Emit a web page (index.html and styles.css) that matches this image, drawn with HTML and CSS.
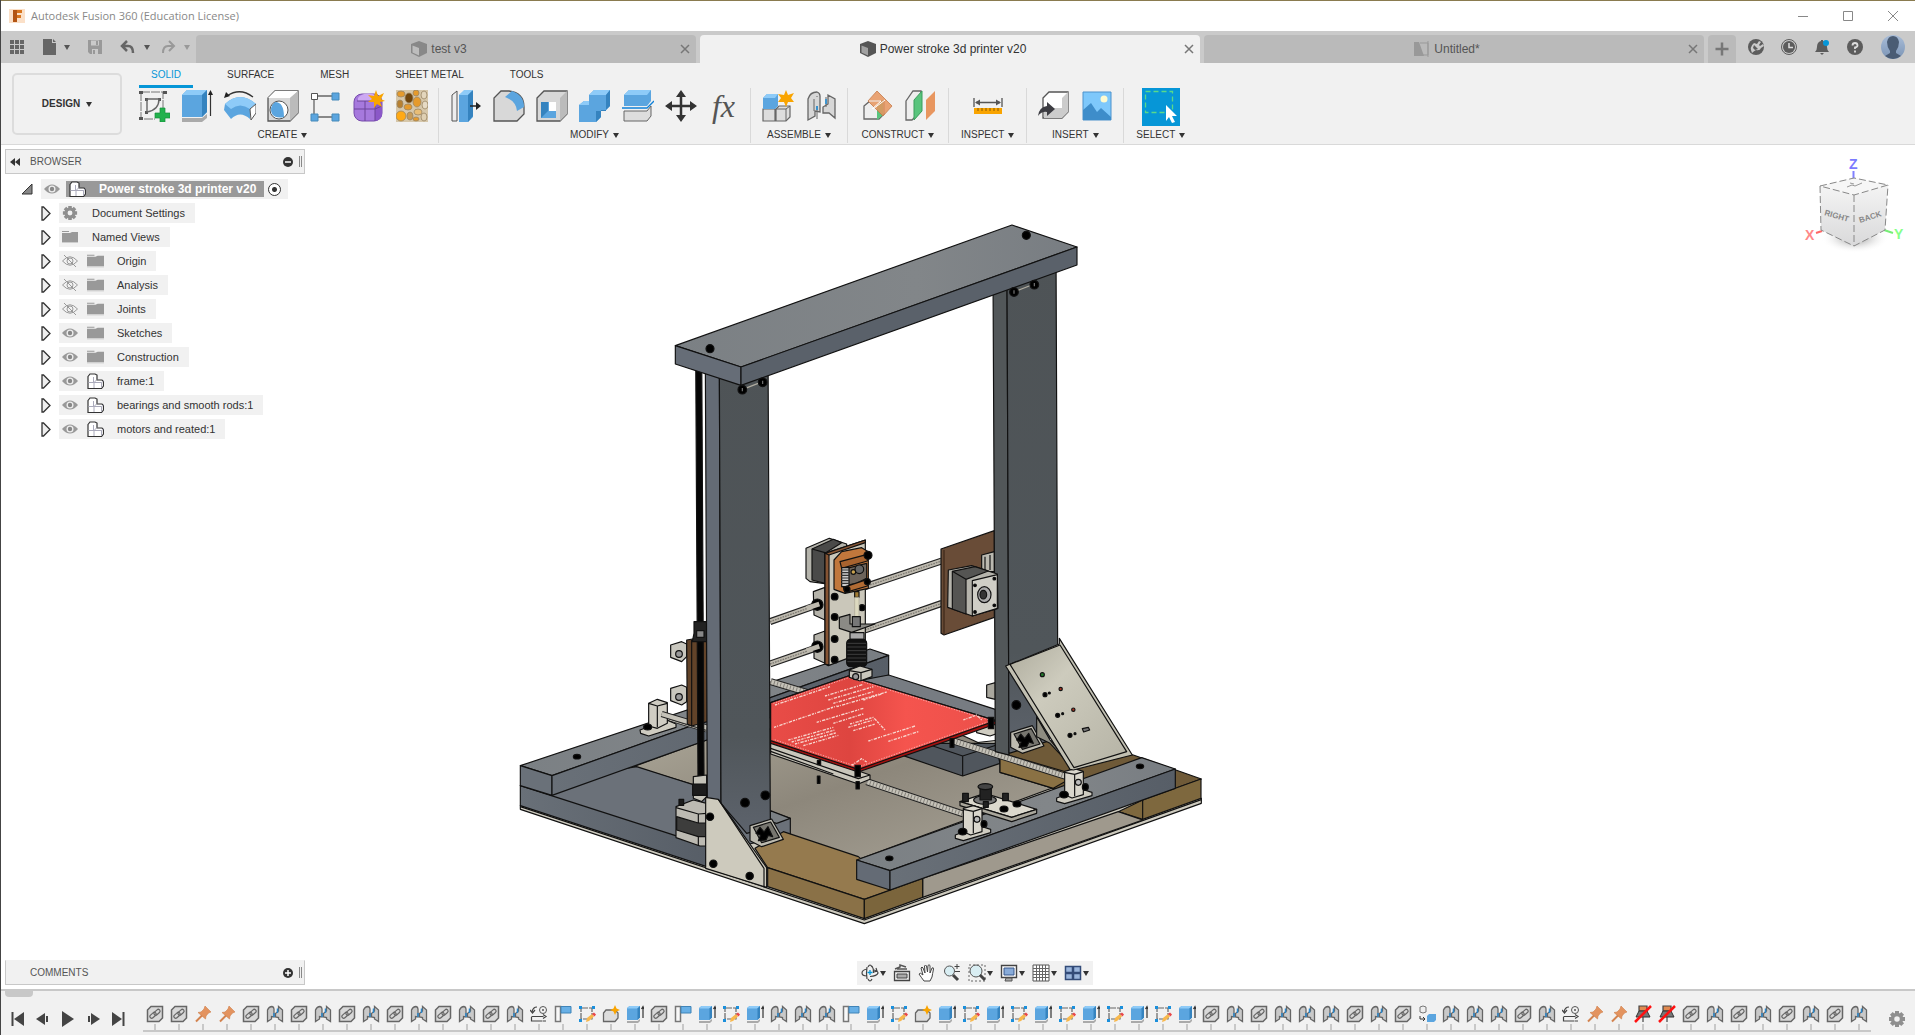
FILE: index.html
```html
<!DOCTYPE html>
<html lang="en">
<head>
<meta charset="utf-8">
<title>Autodesk Fusion 360 (Education License)</title>
<link rel="stylesheet" href="styles.css">
</head>
<body>
<svg class="defs" aria-hidden="true">
  <defs>
    <linearGradient id="floorG" x1="0" x2="1" y1="0" y2="1"><stop offset="0" stop-color="#b0ab9c"/><stop offset=".5" stop-color="#8d877b"/><stop offset="1" stop-color="#a9a498"/></linearGradient>
    <linearGradient id="topG" x1="0" x2="1"><stop offset="0" stop-color="#7b8084"/><stop offset=".6" stop-color="#828689"/><stop offset="1" stop-color="#787d82"/></linearGradient>
    <linearGradient id="sideG" x1="0" x2="1"><stop offset="0" stop-color="#697078"/><stop offset="1" stop-color="#575e67"/></linearGradient>
    <linearGradient id="colG" x1="0" x2="0" y1="0" y2="1"><stop offset="0" stop-color="#4e5356"/><stop offset=".8" stop-color="#50565a"/><stop offset="1" stop-color="#5d636c"/></linearGradient>
    <linearGradient id="panelG" x1="0" x2="1" y1="0" y2="1"><stop offset="0" stop-color="#aeac9d"/><stop offset=".35" stop-color="#cdcbbd"/><stop offset="1" stop-color="#b5b3a5"/></linearGradient>
    <linearGradient id="bedG" x1="0" x2="1"><stop offset="0" stop-color="#e94c47"/><stop offset=".35" stop-color="#de4540"/><stop offset=".6" stop-color="#f5544e"/><stop offset="1" stop-color="#ec504a"/></linearGradient>
    <linearGradient id="cubeG" x1="0" x2="0" y1="0" y2="1"><stop offset="0" stop-color="#f4f4f4"/><stop offset="1" stop-color="#d9d9da"/></linearGradient>
    <linearGradient id="avG" x1="0" x2="0" y1="0" y2="1"><stop offset="0" stop-color="#a9bdd8"/><stop offset="1" stop-color="#7b94b5"/></linearGradient>
    <radialGradient id="shG"><stop offset="0" stop-color="#888"/><stop offset="1" stop-color="#fff" stop-opacity="0"/></radialGradient>
  </defs>
  <symbol id="eye" viewBox="0 0 16 12"><path d="M0 6Q8-3 16 6Q8 15 0 6Z" fill="#999"/><circle cx="8" cy="6" r="3.500" fill="#eee"/><circle cx="8" cy="6" r="2.200" fill="#888"/></symbol>
  <symbol id="eyeoff" viewBox="0 0 16 12"><path d="M.5 6Q8-2.500 15.500 6Q8 14.500 .5 6ZM2 0L14 12" fill="none" stroke="#999"/><circle cx="8" cy="6" r="3" fill="none" stroke="#999"/></symbol>
  <symbol id="folder" viewBox="0 0 16 14"><path d="M0 1h7v1H0zM0 3h8l2-1h6v10H0z" fill="#999"/><path d="M0 12h16v1H0z" fill="#ccc"/></symbol>
  <symbol id="comp" viewBox="0 0 17 16"><path d="M1 3.500L3 1h5l2 1v5l5 0 1.500 1.500V13l-2 2.500H1Z" fill="#fff" stroke="#333" stroke-width="1.200"/><path d="M1.500 9.500h5.500v5.500M7 9.500l3-3M7 9.500h7.500M14.500 9.500l2-1.500M14.500 9.500v5M6.500 4v5" fill="none" stroke="#aab" stroke-width="1"/></symbol>
  <symbol id="tri" viewBox="0 0 10 15"><path d="M1 1L2.500 1 9 7.500 2.500 14 1 14Z" fill="#eee" stroke="#333" stroke-width="1.300"/></symbol>
  <symbol id="caret" viewBox="0 0 6 5"><path d="M0 0h6L3 5Z" fill="currentColor"/></symbol>
  <symbol id="link" viewBox="0 0 18 18"><path d="M1.500 5L5 1.500h11.500V13L13 16.500H1.500Z" fill="#d8d8d8" stroke="#666" stroke-width="1.500"/><g fill="none" stroke="#666" stroke-width="1.200"><rect x="3.500" y="8.500" width="7" height="3.600" rx="1.800" transform="rotate(-42 7 10.300)"/><rect x="7.500" y="5.500" width="7" height="3.600" rx="1.800" transform="rotate(-42 11 7.300)"/></g></symbol>
  <symbol id="joint" viewBox="0 0 18 18"><path d="M1.500 16.500V5Q3 1.500 6 1.500Q8 2 8 4V12L5.500 11.500V14ZM16.500 16.500V5L12.500 1.500V6L9.500 8.500V12L12.500 12.500V14Z" fill="#c9c9c9" stroke="#666" stroke-width="1.300"/><path d="M8 8v4M11.500 3.500V8" stroke="#2a87cc" stroke-width="1.500"/></symbol>
  <symbol id="pin" viewBox="0 0 18 18"><path d="M11 1L17 7 14.500 8 12 11 11.500 14 4 7.500 7 7 10 4Z" fill="#e3935f" stroke="#cf7f4c" stroke-width=".6"/><path d="M8 10.500L2 16.500" stroke="#d3834f" stroke-width="2"/></symbol>
  <symbol id="redpin" viewBox="0 0 18 18"><path d="M5 1h8v5H5zM9 12v5" fill="#e08a50" stroke="#444" stroke-width="1.200"/><path d="M5 6h8l3 6H2Z" fill="#777" stroke="#333"/><path d="M1 17L17 1" stroke="#f11" stroke-width="2.500"/></symbol>
  <symbol id="motion" viewBox="0 0 18 18"><circle cx="13" cy="5" r="3.500" fill="none" stroke="#555"/><circle cx="13" cy="5" r="1" fill="#555"/><path d="M2 7Q3 2 7 2M0 5l2.500 3L5 5M1.500 12v4h11M1.500 11.500h12M13 9.500l3 2-3 2M13 16h3" fill="none" stroke="#444" stroke-width="1.200"/></symbol>
  <symbol id="flag" viewBox="0 0 18 18"><path d="M1.500 1.500h5v15h-5z" fill="#f8f8f8" stroke="#777" stroke-width="1.500"/><path d="M7 1.500h10v6.500H7z" fill="#68b0e6" stroke="#3f84b8"/></symbol>
  <symbol id="sk" viewBox="0 0 18 18"><path d="M3 3h11v11H3z" fill="none" stroke="#666" stroke-width="1.200" stroke-dasharray="7 1"/><path d="M1 1h3v3H1zM14 1h3v3h-3zM1 14h3v3H1z" fill="#1b8fdb"/><path d="M8 17l1-4 5-4 2 2.500-5 4.500Z" fill="#f8b84d"/><path d="M14 9l2-1.500 2 2L16.500 11.500Z" fill="#e8474a"/></symbol>
  <symbol id="newc" viewBox="0 0 18 18"><path d="M1.500 8L4 5h9l3 3v5l-3 3.500H1.500Z" fill="#ddd" stroke="#666" stroke-width="1.300"/><path d="M13 0l1.500 3.500L18 5l-3.500 1.500L13 10l-1.500-3.500L8 5l3.500-1.500Z" fill="#f9a400"/></symbol>
  <symbol id="ext" viewBox="0 0 18 18"><path d="M1 3L3.500 1H14v11.500L11.500 15H1Z" fill="#5ba5df"/><path d="M1 3.500L3.500 1H14L11.500 3.500Z" fill="#8ecbf8"/><path d="M11.500 3.500L14 1v11.500L11.500 15Z" fill="#3583bf"/><path d="M1 16h10.500l2.500-2v2l-2 2H1Z" fill="#aaa"/><path d="M17 2v11M15.500 4L17 1.500 18 4" fill="none" stroke="#333" stroke-width="1.200"/></symbol>
  <symbol id="copy" viewBox="0 0 18 18"><path d="M2 2Q5 0 8 2v5Q5 9 2 7Z" fill="#eee" stroke="#777"/><path d="M2 11v3h4M5 12l2 2-2 2" fill="none" stroke="#333"/><path d="M9 11l2-2h7v6l-2 2H9Z" fill="#5ba5df"/></symbol>
  <symbol id="cube" viewBox="0 0 16 16"><path d="M0 3L8 0 16 3V12L8 16 0 12Z" fill="currentColor"/><path d="M1.500 4.500L8 7V14.500L1.500 11.500Z" fill="#fff" opacity=".45"/></symbol>
  <symbol id="gear" viewBox="0 0 18 18"><path d="M7 1h4v16H7zM1 7h16v4H1z" fill="#8f8f8f"/><path d="M7 1h4v16H7zM1 7h16v4H1z" fill="#8f8f8f" transform="rotate(45 9 9)"/><circle cx="9" cy="9" r="4.500" fill="#f1f1f1" stroke="#8f8f8f" stroke-width="3.500"/></symbol>
</svg>

<header class="titlebar">
  <svg class="i16" viewBox="0 0 16 16"><path d="M0 1h16v14H0z" fill="#fbe0c8"/><path d="M4 2h9v3H8v2h4v3H8v4H4Z" fill="#d8751f"/><path d="M4 2h4v12H4z" fill="#b35413"/></svg>
  <h1 class="title">Autodesk Fusion 360 (Education License)</h1>
  <div class="wincontrols">
    <button aria-label="Minimize"><svg class="i12" viewBox="0 0 12 12"><path d="M1 6.500h10" stroke="#888"/></svg></button>
    <button aria-label="Maximize"><svg class="i12" viewBox="0 0 12 12"><path d="M1.500 1.500h9v9h-9z" fill="none" stroke="#888"/></svg></button>
    <button aria-label="Close"><svg class="i12" viewBox="0 0 12 12"><path d="M1 1l10 10M11 1L1 11" stroke="#888"/></svg></button>
  </div>
</header>

<div class="tabbar">
  <div class="quick">
    <button aria-label="Data panel"><svg class="i16" viewBox="0 0 16 16"><path d="M1 1h4v4H1zM6 1h4v4H6zM11 1h4v4h-4zM1 6h4v4H1zM6 6h4v4H6zM11 6h4v4h-4zM1 11h4v4H1zM6 11h4v4H6zM11 11h4v4h-4z" fill="#666"/></svg></button>
    <button aria-label="File"><svg class="i16" viewBox="0 0 16 16"><path d="M1 0h9v4h4v12H1zM11 0l3 3h-3z" fill="#666"/></svg><svg class="caret"><use href="#caret"/></svg></button>
    <button aria-label="Save"><svg class="i16" viewBox="0 0 16 16"><path d="M1 1h14v14H3l-2-2z" fill="#999"/><path d="M4 1.500h8v5H4zM5 10h6v5H5z" fill="#cacaca"/><path d="M9 2h2v4H9zM6 11h2v4H6z" fill="#999"/></svg></button>
    <button aria-label="Undo"><svg class="i16" viewBox="0 0 16 16"><path d="M7 2L2 7l5 5M2 7h6q5 0 5 7" fill="none" stroke="#666" stroke-width="2.500"/></svg><svg class="caret"><use href="#caret"/></svg></button>
    <button aria-label="Redo" class="dim"><svg class="i16" viewBox="0 0 16 16"><path d="M9 2l5 5-5 5M14 7H8q-5 0-5 7" fill="none" stroke="#999" stroke-width="2"/></svg><svg class="caret"><use href="#caret"/></svg></button>
  </div>
  <nav class="doctabs">
    <div class="doctab"><a href="#test"><svg class="i16"><use href="#cube"/></svg>test v3</a><button aria-label="Close test v3"><svg class="i12" viewBox="0 0 12 12"><path d="M2 2l8 8M10 2l-8 8" stroke="#777" stroke-width="1.500"/></svg></button></div>
    <div class="doctab on"><a href="#printer"><svg class="i16"><use href="#cube"/></svg>Power stroke 3d printer v20</a><button aria-label="Close Power stroke"><svg class="i12" viewBox="0 0 12 12"><path d="M2 2l8 8M10 2l-8 8" stroke="#777" stroke-width="1.500"/></svg></button></div>
    <div class="doctab"><a href="#untitled"><svg class="i16" viewBox="0 0 16 16"><path d="M0 1h5l5 14H0z" fill="#999"/><path d="M6 2h8v12H9M14 0v16" fill="none" stroke="#999"/></svg>Untitled*</a><button aria-label="Close Untitled"><svg class="i12" viewBox="0 0 12 12"><path d="M2 2l8 8M10 2l-8 8" stroke="#777" stroke-width="1.500"/></svg></button></div>
  </nav>
  <button class="newtab" aria-label="New tab"><svg class="i16" viewBox="0 0 16 16"><path d="M8 1.500v13M1.500 8h13" stroke="#777" stroke-width="2.500"/></svg></button>
  <div class="account">
    <button aria-label="Extensions"><svg class="i16" viewBox="0 0 16 16"><circle cx="8" cy="8" r="8" fill="#5c5c5c"/><path d="M4 14Q1 8 6 4l3 1 2-3 2 1-2 3 1 1 3-2 1 2-3 2q-1 3-5 2Q6 12 4 14Z" fill="#cacaca"/><path d="M6 6l4 4-3 1-2-2Z" fill="#5c5c5c"/></svg></button>
    <button aria-label="Job status"><svg class="i16" viewBox="0 0 16 16"><circle cx="8" cy="8" r="7.500" fill="none" stroke="#5c5c5c"/><circle cx="8" cy="8" r="6" fill="#5c5c5c"/><path d="M8 4v4.500h4" fill="none" stroke="#ddd" stroke-width="1.500"/></svg></button>
    <button aria-label="Notifications"><svg class="i16" viewBox="0 0 16 16"><path d="M7 1h2v1q4 1 4 6 0 3 2 5H1q2-2 2-5 0-5 4-6ZM6 14h4l-2 2Z" fill="#5c5c5c"/><circle cx="12" cy="4" r="3" fill="#0696d7"/></svg></button>
    <button aria-label="Help"><svg class="i16" viewBox="0 0 16 16"><circle cx="8" cy="8" r="8" fill="#5c5c5c"/><path d="M5.500 6.500Q5.500 4 8 4t2.500 2.500Q10.500 8 8 8.500V10M8 11.500v2" fill="none" stroke="#ddd" stroke-width="1.800"/></svg></button>
    <button class="avatar" aria-label="Profile"><svg viewBox="0 0 24 24"><circle cx="12" cy="12" r="12" fill="url(#avG)"/><path d="M6 7Q7 1 12 1t6 6q0 5-3 9v2l5 3q-4 3-8 3t-8-3l5-3v-2Q6 12 6 7Z" fill="#4a5c74"/></svg></button>
  </div>
</div>

<div class="ribbon">
  <button class="workspace">DESIGN <svg class="caret"><use href="#caret"/></svg></button>
  <div class="tools">
    <nav class="modes"><a class="on" href="#solid">SOLID</a><a href="#surface">SURFACE</a><a href="#mesh">MESH</a><a href="#sheet">SHEET METAL</a><a href="#tools">TOOLS</a></nav>
    <div class="groups">
      <section class="group">
        <div class="icons">
          <button aria-label="Create Sketch"><svg viewBox="0 0 32 32"><path d="M3 2h22v18M3 2v27h14" fill="none" stroke="#777" stroke-dasharray="9 1"/><path d="M1 1h4v3H1zM25 1h4v3h-4zM1 27h4v3H1zM7 8h3v3H7zM20 8h3v3h-3zM7 21h3v3H7z" fill="#555"/><path d="M9 9h12Q21 20 9 22Z" fill="none" stroke="#666" stroke-width="1.400"/><path d="M22 18h5v5h5v5h-5v4h-5v-4h-5v-5h5z" fill="#22b14c" stroke="#14903a" stroke-width=".7"/></svg></button>
          <button aria-label="Extrude"><svg viewBox="0 0 32 32"><path d="M1 5L6 0h20v22l-5 5H1Z" fill="#5ba5df"/><path d="M1 5L6 0h20l-5 5Z" fill="#8ecbf8"/><path d="M21 5l5-5v22l-5 5Z" fill="#3583bf"/><path d="M1 28h20l5-4v4l-5 4H1Z" fill="#aaa"/><path d="M29.500 3v23" stroke="#333" stroke-width="1.200"/><path d="M27 5l2.500-5L32 5Z" fill="#222"/></svg></button>
          <button aria-label="Revolve"><svg viewBox="0 0 32 32"><path d="M3 6Q16-3 29 7" fill="none" stroke="#333" stroke-width="1.300"/><path d="M0 8l2-6 4 4Z" fill="#222"/><path d="M1 14Q16 0 32 14l-6 4v11Q16 20 7 29L0 20Z" fill="#5ba5df"/><path d="M1 14Q16 0 32 14l-6 5Q16 12 7 19Z" fill="#8ecbf8"/><path d="M26 19l6-5v9l-5 7Z" fill="#fff" stroke="#555"/></svg></button>
          <button aria-label="Hole"><svg viewBox="0 0 32 32"><path d="M1 8L8 1h23v22l-8 8H1Z" fill="#d8d8d8" stroke="#555" stroke-width="1.300"/><path d="M1 8L8 1h23l-8 7Z" fill="#fff"/><path d="M23 8l8-7v22l-8 8Z" fill="#bbb"/><circle cx="12" cy="20" r="9" fill="#fff" stroke="#555"/><path d="M8 12q9 0 9 15-8 2-12-3-3-7 3-12Z" fill="#5ba5df"/></svg></button>
          <button aria-label="Pattern"><svg viewBox="0 0 32 32"><path d="M8 6h14M4 10v14M8 27h14" stroke="#666" stroke-width="1.300"/><path d="M1.500 3.500h6v6h-6z" fill="#fff" stroke="#555"/><path d="M22 3h7v7h-7zM1 24h7v7H1zM22 24h7v7h-7z" fill="#5ba5df" stroke="#478ab9"/></svg></button>
          <button aria-label="Create Form"><svg viewBox="0 0 32 32"><rect x="1" y="4" width="28" height="27" rx="8" fill="#a679dd" stroke="#774cac"/><path d="M5 8Q9 2 20 4l5 4-3 3H5Z" fill="#cda8f3"/><path d="M22 11q7-4 7 2v11q0 6-7 7Z" fill="#8b58c8"/><path d="M1 19h21l7-3M12 11v20M22 11v20M4 11h18" fill="none" stroke="#6c4599"/><path d="M23 0l2 6 6-3-3 6 4 2-5 1 2 5-5-3-3 4v-6l-6 0 4-3-4-4 6 1Z" fill="#f9a400"/></svg></button>
          <button aria-label="Voronoi Texture"><svg viewBox="0 0 32 32"><path d="M0 0h32v32H0z" fill="#d6c7aa"/><g fill="#e59a2c" stroke="#9b8766" stroke-width=".8"><ellipse cx="5" cy="4" rx="4" ry="3"/><ellipse cx="13" cy="8" rx="4" ry="5" fill="#70450c"/><ellipse cx="20" cy="3" rx="3" ry="3"/><ellipse cx="28" cy="5" rx="3" ry="4" fill="#e3d6bd"/><ellipse cx="4" cy="14" rx="3" ry="4" fill="#b88131"/><ellipse cx="12" cy="17" rx="4" ry="3"/><ellipse cx="21" cy="12" rx="4" ry="5"/><ellipse cx="29" cy="15" rx="3" ry="4" fill="#e6dac4"/><ellipse cx="5" cy="26" rx="5" ry="5" fill="#ffa914"/><ellipse cx="14" cy="26" rx="3" ry="4" fill="#c79b56"/><ellipse cx="22" cy="22" rx="4" ry="3" fill="#e8bd75"/><ellipse cx="28" cy="27" rx="3" ry="4" fill="#dfd0b3"/><ellipse cx="20" cy="29" rx="3" ry="2"/></g></svg></button>
        </div>
        <button class="label">CREATE <svg class="caret"><use href="#caret"/></svg></button>
      </section>
      <section class="group">
        <div class="icons">
          <button aria-label="Press Pull"><svg viewBox="0 0 32 32"><path d="M2 5l5-4v30H2Z" fill="#eee" stroke="#555"/><path d="M9 5l5-4h9v26l-5 5H9Z" fill="#5ba5df"/><path d="M9 5l5-5h9l-5 5Z" fill="#8ecbf8"/><path d="M18 5l5-5v26l-5 6Z" fill="#3583bf"/><path d="M20 16h8" stroke="#222" stroke-width="1.500"/><path d="M26 12l5 4-5 4Z" fill="#222"/></svg></button>
          <button aria-label="Fillet"><svg viewBox="0 0 32 32"><path d="M1 31V8l7-7h8q15 2 15 16v7l-7 7Z" fill="#d8d8d8" stroke="#555" stroke-width="1.300"/><path d="M12 7l7-6q12 4 12 16l-7 4Q23 11 12 7Z" fill="#5ba5df"/></svg></button>
          <button aria-label="Shell"><svg viewBox="0 0 32 32"><path d="M1 8l7-7h23v23l-7 7H1Z" fill="#d8d8d8" stroke="#555" stroke-width="1.300"/><path d="M24 8l7-7v23l-7 7Z" fill="#bbb"/><path d="M5 12h15v16H5z" fill="#fff"/><path d="M5 12h8v9l7 0v7H5Z" fill="#5ba5df"/><path d="M5 12h7v9l-7 7Z" fill="#3583bf"/></svg></button>
          <button aria-label="Combine"><svg viewBox="0 0 32 32"><path d="M0 15l5-4h5V5l5-5h16v16l-4 4h-5v7l-5 5H0Z" fill="#5ba5df"/><path d="M10 5l5-5h16l-4 5ZM0 15l5-4h5v4Z" fill="#8ecbf8"/><path d="M27 5l4-5v16l-4 4h-5v7l-5 5V21h10Z" fill="#3583bf"/></svg></button>
          <button aria-label="Split Body"><svg viewBox="0 0 32 32"><path d="M2 21h23l4-5v10l-4 5H2Z" fill="#ddd" stroke="#666"/><path d="M2 5l5-5h22v11l-4 5H2Z" fill="#5ba5df"/><path d="M2 5l5-5h22l-4 5Z" fill="#8ecbf8"/><path d="M0 18h25l7-7" fill="none" stroke="#0f80d8" stroke-width="1.300"/></svg></button>
          <button aria-label="Move"><svg viewBox="0 0 32 32"><path d="M16 3v26M3 16h26" stroke="#333" stroke-width="2.500"/><path d="M11 7l5-7 5 7ZM11 25l5 7 5-7ZM7 11l-7 5 7 5ZM25 11l7 5-7 5Z" fill="#333"/></svg></button>
          <button class="fx" aria-label="Parameters">fx</button>
        </div>
        <button class="label">MODIFY <svg class="caret"><use href="#caret"/></svg></button>
      </section>
      <section class="group">
        <div class="icons">
          <button aria-label="New Component"><svg viewBox="0 0 32 32"><path d="M1 19h12v12H1zM14 19l3-3h11v11l-4 4H14Z" fill="#ddd" stroke="#666" stroke-width="1.200"/><path d="M24 19l4-3M24 19v12M14 19h10" stroke="#666"/><path d="M1 8l4-4h11v12l-3 3H1Z" fill="#5ba5df"/><path d="M1 8l4-4h11l-3 4Z" fill="#8ecbf8"/><path d="M24 0l2 5 6-2-3 5 3 4-6 0-2 5-2-5-6 0 3-4-3-4 6 1Z" fill="#f9a400"/></svg></button>
          <button aria-label="Joint"><svg viewBox="0 0 32 32"><path d="M3 30V9Q5 2 12 2q3 1 3 4v16l-5-1v5ZM30 28V9l-7-4v9l-5 3v6l6 0Z" fill="#d7d7d7" stroke="#666" stroke-width="1.300"/><path d="M12 6v1M12 16v13M21 7v10M9 9v12" stroke="#666"/><path d="M12 16v4M21 9v5" stroke="#1b8fdb" stroke-width="1.500"/></svg></button>
        </div>
        <button class="label">ASSEMBLE <svg class="caret"><use href="#caret"/></svg></button>
      </section>
      <section class="group mid">
        <div class="icons">
          <button aria-label="Offset Plane"><svg viewBox="0 0 32 32"><path d="M3 16l6-5h14v13l-5 5H3Z" fill="#eee" stroke="#666" stroke-width="1.300"/><path d="M16 15l6-5v15l-6 5Z" fill="#59c47d"/><path d="M16 1l15 15-9 10L7 11Z" fill="#e8965f" opacity=".85" stroke="#c97a47"/><path d="M8 11h12l-9 8M12 19l12-9" fill="none" stroke="#fff"/></svg></button>
          <button aria-label="Midplane"><svg viewBox="0 0 32 32"><path d="M2 11L9 1h8v20L8 30H2Z" fill="#eee" stroke="#666" stroke-width="1.300"/><path d="M10 10l8-9v20l-8 9Z" fill="#59c47d" stroke="#3b9e5d"/><path d="M22 10l9-9v20l-9 9Z" fill="#e8965f"/></svg></button>
        </div>
        <button class="label">CONSTRUCT <svg class="caret"><use href="#caret"/></svg></button>
      </section>
      <section class="group wide">
        <div class="icons">
          <button aria-label="Measure"><svg viewBox="0 0 32 32"><path d="M2 8v9M30 8v9M4 12.500h24" stroke="#555" stroke-width="1.300"/><path d="M3 12.500l5-3v6ZM29 12.500l-5-3v6Z" fill="#555"/><path d="M2 18h28v6H2z" fill="#f9a400"/><path d="M6 18v3M10 18v3M14 18v3M18 18v3M22 18v3M26 18v3" stroke="#8a5b00"/></svg></button>
        </div>
        <button class="label">INSPECT <svg class="caret"><use href="#caret"/></svg></button>
      </section>
      <section class="group">
        <div class="icons">
          <button aria-label="Insert Derive"><svg viewBox="0 0 32 32"><path d="M5 8l6-6h19v20l-6 6H5Z" fill="#fff" stroke="#555" stroke-width="1.300"/><path d="M24 8l6-6v20l-6 6ZM6 18h18v10H6Z" fill="#ccc"/><path d="M0 26q1-9 9-10v-4l8 7-8 7v-4q-5-1-9 4Z" fill="#3c3c42"/></svg></button>
          <button aria-label="Canvas"><svg viewBox="0 0 32 32"><path d="M2 2h28v28H2z" fill="#7ec8fb" stroke="#4c92cc"/><path d="M2 20l8-7 6 9 4-4 10 9v3H2Z" fill="#3e8dca"/><circle cx="23" cy="9" r="3.500" fill="#fffbd0"/></svg></button>
        </div>
        <button class="label">INSERT <svg class="caret"><use href="#caret"/></svg></button>
      </section>
      <section class="group wide last">
        <div class="icons">
          <button class="sel" aria-label="Select"><svg viewBox="0 0 38 38"><path d="M3.500 3.500h27v21h-27z" fill="none" stroke="#59d98a" stroke-dasharray="5 3" stroke-width="1.300"/><path d="M24 17l11 11-5 0 3 6-3 1-3-6-3 4Z" fill="#fff"/></svg></button>
        </div>
        <button class="label">SELECT <svg class="caret"><use href="#caret"/></svg></button>
      </section>
    </div>
  </div>
</div>

<main class="stage">
  <svg class="model" viewBox="1 145 1914 844" role="img" aria-label="3D printer model">
    <g transform="translate(500 640) scale(.33333)" stroke="#111" stroke-width="3.500" stroke-linejoin="round">
      <!-- base sheet and floor -->
      <path d="M61 497L61 508L1093 851L2104 490V475L1500 300L600 400Z" fill="#cdcabe"/>
      <path d="M61 500L1093 840L2104 479" fill="none"/>
      <path d="M400 380L620 300L1200 200L1700 430L1640 450L1070 660L870 590L600 440Z" fill="url(#floorG)"/>
      <path d="M61 437L410 380L620 447L871 535V585L620 640Z" fill="#6b7179"/>
      <path d="M61 437L620 617V680L61 497Z" fill="url(#sideG)"/>
      <path d="M811 512L871 535L830 550L811 545Z" fill="#7b8084"/>
      <!-- rear beams -->
      <path d="M61 377L1110 27L1166 46L156 407Z" fill="url(#topG)"/>
      <path d="M61 377L156 407V466L61 437Z" fill="#6a7179"/>
      <path d="M156 407L1166 46V105L156 466Z" fill="url(#sideG)"/>
      <path d="M1166 105L1486 208V260L1060 125Z" fill="#777c82"/>
      <path d="M1210 347L1290 310L1486 310L1500 370L1388 408Z" fill="#50565d"/>
      <path d="M1388 408V348L1290 315M1388 348L1490 315" fill="none"/>
      <!-- timber right -->
      <path d="M1500 335L1640 300L1900 345L2104 417L1928 480L1660 445L1500 397Z" fill="#6f5a38"/>
      <path d="M1500 338L1730 405L1660 445L1500 397Z" fill="#8a7144"/>
      <path d="M1928 480L2103 417V475L1928 538L1855 515Z" fill="#7e683e"/>
      <path d="M1928 480V538"/>
      <path d="M1268 715L1855 515L1928 540L1268 772Z" fill="#9f998d"/>
      <!-- timber left -->
      <path d="M850 575L1075 650L1190 745L1093 778L803 683L765 625Z" fill="#957a4e"/>
      <path d="M803 683L1093 778V836L803 740Z" fill="#8a7147"/>
      <path d="M1093 778L1268 715V772L1093 836Z" fill="#7b653c"/>
      <!-- smooth rods -->
      <path d="M812 125L930 160M480 225L620 267M1360 303L1700 410M1100 425L1390 522" stroke="#222" stroke-width="21"/>
      <path d="M812 125L930 160M480 225L620 267M1360 303L1700 410M1100 425L1390 522" stroke="#c5c2b8" stroke-width="15"/>
      <path d="M812 125L930 160M480 225L620 267M1360 303L1700 410M1100 425L1390 522" stroke="#85827b" stroke-width="14" stroke-dasharray="3 7"/>
      <!-- front beam -->
      <path d="M1070 660L1925 353L2026 387L1170 692Z" fill="url(#topG)"/>
      <path d="M1070 660L1170 692V750L1070 718Z" fill="#646b75"/>
      <path d="M1170 692L2026 387V445L1170 750Z" fill="url(#sideG)"/>
      <!-- idler plate -->
      <path d="M1380 485L1455 460L1610 508L1535 532Z" fill="#dbd8cd"/><path d="M1380 485L1535 532L1610 508V520L1535 545L1380 497Z" fill="#aaa79c"/>
      <ellipse cx="1455" cy="480" rx="34" ry="13" fill="#777"/><path d="M1440 440h34v40h-34z" fill="#222"/><ellipse cx="1456" cy="440" rx="22" ry="9" fill="#444"/>
      <path d="M1388 460h17v25h-17zM1508 460h17v22h-17zM1450 485h15v17h-15z" fill="#222"/><ellipse cx="1512" cy="507" rx="12" ry="9"/><ellipse cx="1551" cy="492" rx="12" ry="9"/>
      <!-- rod supports -->
      <g id="sup"><path d="M1366 585L1440 558L1472 568V578L1390 602L1366 595Z" fill="#cfccc1"/><path d="M1390 505L1420 497L1446 505V575L1412 585L1390 575Z" fill="#d9d6cc"/><path d="M1420 512V580M1390 508L1420 514L1446 506" fill="none"/><circle cx="1431" cy="538" r="9" fill="#bbb"/><ellipse cx="1388" cy="575" rx="13" ry="10"/><ellipse cx="1452" cy="552" rx="9" ry="10"/></g>
      <use href="#sup" x="304" y="-111"/>
      <path d="M420 270L500 240L528 252V262L446 288L422 280Z" fill="#cfccc1"/><path d="M446 190L472 178L502 188V250L472 265L446 258Z" fill="#d0cdc3"/><path d="M472 198V262M446 190L472 198L502 190" fill="none"/><ellipse cx="443" cy="261" rx="12" ry="9"/>
      <path d="M485 222L620 263" stroke="#222" stroke-width="19"/><path d="M485 222L620 263" stroke="#c5c2b8" stroke-width="13"/>
      <ellipse cx="231" cy="350" rx="11" ry="7"/><ellipse cx="1168" cy="655" rx="11" ry="7"/><ellipse cx="1920" cy="379" rx="11" ry="7"/>
      <!-- heated bed -->
      <path d="M812 300L1110 405V418L1075 432L812 342Z" fill="#c9c6bb"/><path d="M812 325L1075 416L1110 405M812 334L1000 402" fill="none"/>
      <path d="M1430 270L1480 252L1508 265V275L1470 288L1430 278Z" fill="#cfccc1"/>
      <path d="M812 188L1045 108L1488 242V252L1075 396L812 310Z" fill="#a5100f"/>
      <path d="M812 188L1045 108L1488 242L1075 388L812 302Z" fill="url(#bedG)"/>
      <path d="M820 190L1046 113L1474 242L1075 381L820 298" fill="none" stroke="#fbb" stroke-width="2.500" stroke-dasharray="4 4"/>
      <g fill="none" stroke="#f8d5cd" stroke-width="4" stroke-dasharray="7 3 3 4 10 3">
        <path d="M822 262L1010 198M825 195L990 140M975 168L1090 133M985 180L1120 140M1000 190L1120 155M1010 200L1160 156M950 247L1090 205M1000 250L1090 222M1090 180L1145 162"/>
        <path d="M865 300L1000 262M875 306L1005 270M885 312L1010 278M910 317L1015 286M1105 303L1245 258M1165 304L1255 275M1050 252L1120 232L1155 270M1045 262L1120 240M1060 272L1125 252M1055 376L1085 356L1100 366M1390 240L1430 225L1445 240"/>
      </g>
      <path d="M1065 376h16v34h-16zM1068 425h10v22h-10zM952 362h10v12h-10zM952 408h8v22h-8zM1465 232h16v34h-16zM1350 296h12v26h-12z"/>
    </g>

    <g transform="translate(660 500) scale(.33333)" stroke="#111" stroke-width="3.500" stroke-linejoin="round">
      <!-- x axis rods -->
      <path d="M330 365L480 312M330 492L480 440M615 260L845 183M615 390L845 310" stroke="#222" stroke-width="21"/>
      <path d="M330 365L480 312M330 492L480 440M615 260L845 183M615 390L845 310" stroke="#bdb9ae" stroke-width="14"/>
      <path d="M330 365L480 312M330 492L480 440M615 260L845 183M615 390L845 310" stroke="#7d7a73" stroke-width="4" stroke-dasharray="5 3"/>
      <!-- right plate -->
      <path d="M843 147L1003 92V352L852 405L843 400Z" fill="#694c37"/><path d="M852 150V405" stroke="#3b2618"/>
      <path d="M965 165L1003 155V215H965Z" fill="#bbb9b0"/><path d="M975 170V210M990 165V210" fill="none"/>
      <!-- extruder carriage -->
      <path d="M438 145L508 115L560 132V260L450 245L438 235Z" fill="#b5b4ac"/><path d="M456 147L520 118L545 128L495 160V250L456 240Z" fill="#4a4a49"/><path d="M456 147L495 158" fill="none"/>
      <path d="M460 275L495 262V360L462 345ZM462 405L495 393V490L462 475Z" fill="#b5b3aa"/><circle cx="472" cy="314" r="17"/><circle cx="472" cy="440" r="17"/><path d="M440 325L478 312M440 452L478 439" stroke="#bdb9ae" stroke-width="14"/>
      <path d="M495 160L616 120V455L505 497L495 492Z" fill="#cac7ba"/><path d="M495 160L507 157V495L495 492Z" fill="#865433"/><path d="M495 160L616 120V128L507 165Z" fill="#8a5735"/>
      <path d="M522 180L545 155L605 143L625 155V265L555 280L522 268Z" fill="#c1773c"/><path d="M540 185L622 163V183L545 205Z" fill="#a8632f"/><path d="M548 208L620 190V235L590 250L548 258Z" fill="#6d645b"/><path d="M545 203h22v57h-22z" fill="#ccc"/><path d="M543 210h26M543 218h26M543 226h26M543 234h26M543 242h26M543 250h26" stroke="#333"/>
      <circle cx="598" cy="208" r="13" fill="#666"/><circle cx="580" cy="216" r="7" fill="#c9a24e"/><path d="M550 262L622 238V258L555 278Z" fill="#b26b33"/><circle cx="624" cy="166" r="12"/><circle cx="622" cy="245" r="9"/><circle cx="561" cy="268" r="9"/>
      <g><circle cx="524" cy="290" r="10"/><circle cx="524" cy="351" r="10"/><circle cx="524" cy="417" r="10"/><circle cx="524" cy="479" r="10"/><circle cx="606" cy="323" r="9"/></g>
      <path d="M584 275h13v17h-13z" fill="#a37c34"/><path d="M584 292h13v58h-13z" fill="#ddd9c0" stroke="#a9a593" stroke-width="2"/><path d="M538 352L570 343V372L645 372L575 397L538 385Z" fill="#8b8a85"/><path d="M577 350h24v30h-24z" fill="#777"/>
      <path d="M570 398h42v20h-42z" fill="#aaa"/><rect x="560" y="418" width="60" height="82" rx="12" fill="#111"/><path d="M562 430h56M562 441h56M562 452h56M562 463h56M562 474h56M562 485h56" stroke="#555" stroke-width="2"/>
      <path d="M568 510L600 498L636 508V530L600 543L568 532Z" fill="#cac7bd"/><path d="M568 512L603 518L636 508M603 518V543" fill="none"/><circle cx="587" cy="530" r="9" fill="#999"/>
    </g>

    <g transform="translate(500 640) scale(.33333)" stroke="#111" stroke-width="3.500" stroke-linejoin="round">
      <!-- left z carriage -->
      <path d="M512 15L545 5L560 12V50L545 65L512 52ZM512 145L545 135L560 142V185L545 195L512 182Z" fill="#c9c7be"/><circle cx="537" cy="42" r="10" fill="#999"/><circle cx="537" cy="171" r="10" fill="#999"/>
      <path d="M560 0L622-10V245L575 258L562 252Z" fill="#624329"/><path d="M575 0V258"/>
      <path d="M587-880h18L612 420h-18z" fill="#060606"/><path d="M582-55h38v38l5 22h-48l5-25z" fill="#222"/><path d="M590-28h22v20h-22z" fill="#888"/>
      <!-- z motor -->
      <path d="M528 500L580 480L620 490V618L600 618L528 593Z" fill="#bcbab2"/><path d="M528 503L595 522L620 520M595 522V618" fill="none"/><path d="M530 530L595 549H620V590H595L530 570Z" fill="#3d3d3c"/><path d="M580 410L620 405V470L605 485L580 475Z" fill="#c5c3b9"/><path d="M578 432h42v34h-42zM537 478h14v18h-14z" fill="#1c1c1c"/>
      <!-- columns -->
      <path d="M616-830L658-830L663 490L622 480Z" fill="#646b75"/>
      <path d="M658-830L804-880L811 560L740 580L663 490Z" fill="url(#colG)"/>
      <path d="M1460 135L1486 128V178L1460 172Z" fill="#a9a79e"/>
      <path d="M1479-1100H1521L1527 345L1486 335Z" fill="#525759"/>
      <path d="M1521-1100L1668-1170L1673 20L1760 200L1640 305L1527 340Z" fill="url(#colG)" stroke="none"/><path d="M1521-1100L1527 340M1668-1170L1673 20M1527 340L1640 305" fill="none"/>
      <!-- top beam -->
      <path d="M555-838L610-820L600-812H580Z" fill="#99978a"/>
      <path d="M526-883L1536-1245L1731-1179L723-819Z" fill="url(#topG)"/>
      <path d="M526-883L723-819V-764L526-828Z" fill="#666d77"/>
      <path d="M723-819L1731-1179V-1125L723-764Z" fill="#5a616a"/>
      <circle cx="630" cy="-874" r="12"/><circle cx="1579" cy="-1214" r="12"/>
      <g id="bolts"><path d="M728-752L788-775" stroke="#b0aca0"/><circle cx="727" cy="-751" r="13"/><circle cx="788" cy="-773" r="13"/><path d="M727-756v10M788-778v10" stroke="#777"/></g>
      <use href="#bolts" x="815" y="-293"/>
      <circle cx="735" cy="488" r="13"/><circle cx="796" cy="466" r="13"/><circle cx="1549" cy="195" r="13"/>
      <!-- corner brackets -->
      <g id="brk"><path d="M750 557L815 537L850 598L785 620L750 602Z" fill="#bdbbb0"/><path d="M760 562L812 546L838 592L785 608Z" fill="#77766f"/><path d="M768 580L780 562L792 576L804 560L818 590L805 586L798 600L775 602L782 586Z"/></g>
      <use href="#brk" x="782" y="-280"/>
      <!-- gussets -->
      <path d="M617 472L655 478L800 683V742L617 685Z" fill="#cdcabd"/><path d="M655 478L792 685V740" fill="none"/><circle cx="630" cy="530" r="11"/><circle cx="640" cy="671" r="11"/><circle cx="749" cy="708" r="11"/>
      <path d="M1610 230L1650 300L1720 385L1650 310L1610 290Z" fill="#8e8c80"/>
      <path d="M1517 78L1678 12L1678 -5L1897 345L1720 390L1710 388Z" fill="#c2c0b2"/>
      <path d="M1530 73L1680 15L1880 335L1722 383Z" fill="url(#panelG)"/>
      <circle cx="1627" cy="104" r="6" fill="#237a2c"/><circle cx="1682" cy="147" r="5" fill="#a32"/><circle cx="1720" cy="209" r="5" fill="#a32"/><circle cx="1635" cy="164" r="6"/><circle cx="1673" cy="226" r="6"/><circle cx="1710" cy="286" r="6"/><circle cx="1648" cy="159" r="3"/><circle cx="1688" cy="221" r="3"/><circle cx="1725" cy="281" r="3"/><path d="M1747 266l18-4 4 8-18 6z" fill="#777"/>
    </g>
    <!-- x axis motor, overlapping the right column -->
    <g transform="translate(660 500) scale(.33333)" stroke="#111" stroke-width="3.500" stroke-linejoin="round">
      <path d="M865 210L935 197L1012 222L1014 325L937 348L863 322Z" fill="#b5b4ac"/>
      <path d="M877 214L945 200L985 213L918 238V342L877 327Z" fill="#555553"/><path d="M877 214L918 238" fill="none"/>
      <path d="M937 242L1012 224V325L937 348Z" fill="#cfcec6"/><ellipse cx="973" cy="284" rx="20" ry="24" fill="#aaa"/><ellipse cx="970" cy="284" rx="10" ry="13" fill="#333"/>
      <circle cx="945" cy="256" r="4"/><circle cx="1003" cy="236" r="4"/><circle cx="945" cy="336" r="4"/><circle cx="1003" cy="316" r="4"/>
    </g>
  </svg>

  <div class="overlay">
    <div class="upper">
      <aside class="browser">
        <div class="panel">
          <svg class="i12" viewBox="0 0 12 12"><path d="M6 2v8L1 6ZM11 2v8L6 6Z" fill="#333"/></svg><h2>BROWSER</h2>
          <button aria-label="Collapse browser"><svg class="i10" viewBox="0 0 10 10"><circle cx="5" cy="5" r="5" fill="#333"/><path d="M2 5h6" stroke="#fff" stroke-width="1.500"/></svg></button><span class="grip"></span>
        </div>
        <ul class="tree">
          <li class="root"><svg class="i12" viewBox="0 0 12 12"><path d="M11 1v10H1Z" fill="#888" stroke="#333"/></svg><div class="node"><svg class="eye"><use href="#eye"/></svg><span class="picked"><svg class="comp"><use href="#comp"/></svg><b>Power stroke 3d printer v20</b></span><input type="radio" checked aria-label="Activate component"></div></li>
          <li><svg class="tri"><use href="#tri"/></svg><div class="node"><svg class="eye tall"><use href="#gear"/></svg>Document Settings</div></li>
          <li><svg class="tri"><use href="#tri"/></svg><div class="node"><svg class="eye tall"><use href="#folder"/></svg>Named Views</div></li>
          <li><svg class="tri"><use href="#tri"/></svg><div class="node"><svg class="eye"><use href="#eyeoff"/></svg><svg class="comp"><use href="#folder"/></svg>Origin</div></li>
          <li><svg class="tri"><use href="#tri"/></svg><div class="node"><svg class="eye"><use href="#eyeoff"/></svg><svg class="comp"><use href="#folder"/></svg>Analysis</div></li>
          <li><svg class="tri"><use href="#tri"/></svg><div class="node"><svg class="eye"><use href="#eyeoff"/></svg><svg class="comp"><use href="#folder"/></svg>Joints</div></li>
          <li><svg class="tri"><use href="#tri"/></svg><div class="node"><svg class="eye"><use href="#eye"/></svg><svg class="comp"><use href="#folder"/></svg>Sketches</div></li>
          <li><svg class="tri"><use href="#tri"/></svg><div class="node"><svg class="eye"><use href="#eye"/></svg><svg class="comp"><use href="#folder"/></svg>Construction</div></li>
          <li><svg class="tri"><use href="#tri"/></svg><div class="node"><svg class="eye"><use href="#eye"/></svg><svg class="comp"><use href="#comp"/></svg>frame:1</div></li>
          <li><svg class="tri"><use href="#tri"/></svg><div class="node"><svg class="eye"><use href="#eye"/></svg><svg class="comp"><use href="#comp"/></svg>bearings and smooth rods:1</div></li>
          <li><svg class="tri"><use href="#tri"/></svg><div class="node"><svg class="eye"><use href="#eye"/></svg><svg class="comp"><use href="#comp"/></svg>motors and reated:1</div></li>
        </ul>
      </aside>
      <svg class="viewcube" viewBox="1800 150 104 104">
        <ellipse cx="1855" cy="238" rx="34" ry="15" fill="url(#shG)"/>
        <path d="M1853.500 171v8" stroke="#8080ff" stroke-width="2"/><path d="M1816 233l6-2" stroke="#f66" stroke-width="2"/><path d="M1884 230l9 3" stroke="#7e7" stroke-width="2"/>
        <path d="M1820 186l34-8 34 7-34 10Z" fill="#f6f6f6"/><path d="M1820 186l34 9v51l-33-16Z" fill="url(#cubeG)"/><path d="M1854 195l34-10-3 45-31 16Z" fill="url(#cubeG)"/>
        <path d="M1820 186l34-8 34 7-34 10ZM1820 186l1 44 33 16 31-16 3-45M1854 195v51" fill="none" stroke="#888" stroke-dasharray="7 3"/>
        <path d="M1847 187l5-2 3 1 7-3M1850 183l4 1" fill="none" stroke="#999"/>
        <text class="axis z" x="1849" y="169">Z</text><text class="axis x" x="1805" y="240">X</text><text class="axis y" x="1894" y="239">Y</text>
        <text class="face" x="1824" y="215" transform="rotate(16 1824 215)">RIGHT</text><text class="face" x="1860" y="223" transform="rotate(-18 1860 223)">BACK</text>
      </svg>
    </div>
    <div class="lower">
      <div class="panel comments"><h2>COMMENTS</h2><button aria-label="Expand comments"><svg class="i10" viewBox="0 0 10 10"><circle cx="5" cy="5" r="5" fill="#333"/><path d="M2 5h6M5 2v6" stroke="#fff" stroke-width="1.500"/></svg></button><span class="grip"></span></div>
      <div class="navbar">
        <button aria-label="Orbit"><svg viewBox="0 0 18 18"><path d="M7 3Q9-1 11 3M11 15Q9 19 7 15M6 5Q1 6 1 9t5 3M13 6q4 1 4 3-1 3-8 3.500M6 3q-1 6 0 12M11 2q2 3 1.500 7M15 4l1 3-3 1" fill="none" stroke="#444" stroke-width="1.200"/><path d="M9 6v5M6.500 8.500h5" stroke="#0696d7" stroke-width="1.300"/></svg><svg class="caret"><use href="#caret"/></svg></button>
        <button aria-label="Look at"><svg viewBox="0 0 18 18"><path d="M1.500 7.500h15v9h-15z" fill="#eee" stroke="#444" stroke-width="1.300"/><path d="M4 10h10v4H4z" fill="#aaa" stroke="#444"/><path d="M2 5l5-2V1l6 2M4 5h10" stroke="#555" stroke-width="1.500" fill="none"/></svg></button>
        <button aria-label="Pan"><svg viewBox="0 0 18 18"><path d="M6 17Q3 13 1 10q1-2 4 1L3 4q1-2 2 0l2 5L6.500 2q1-2 2 0l1 6L10 1.500q1-1.500 2 0L12 9l2-5q1.500-1 1.500 1-1 5-1.500 8l-2 4Z" fill="#fff" stroke="#444"/></svg></button>
        <button aria-label="Zoom"><svg viewBox="0 0 18 18"><circle cx="6.500" cy="7" r="5" fill="#d9eef3" stroke="#555"/><path d="M10 11l5 5" stroke="#444" stroke-width="3"/><path d="M14 0v5M11.500 2.500h5M12 7.500h5" stroke="#444"/></svg></button>
        <button aria-label="Fit"><svg viewBox="0 0 18 18"><path d="M1 1h16v16H1z" fill="none" stroke="#666" stroke-dasharray="2 2"/><circle cx="8" cy="7" r="6" fill="#d9eef3" stroke="#555"/><path d="M12 11l5 5" stroke="#444" stroke-width="3"/></svg><svg class="caret"><use href="#caret"/></svg></button>
        <button aria-label="Display settings"><svg viewBox="0 0 18 18"><path d="M1.500 1.500h15v12h-15z" fill="#fff" stroke="#444" stroke-width="1.400"/><path d="M4 4h10v7H4z" fill="#88abd9" stroke="#39598c"/><path d="M6 14h6v3H5z" fill="#aaa" stroke="#555"/></svg><svg class="caret"><use href="#caret"/></svg></button>
        <button aria-label="Grid"><svg viewBox="0 0 18 18"><path d="M1 1h16v16H1z" fill="#fff" stroke="#555"/><path d="M1 4.500h16M1 7.500h16M1 10.500h16M1 13.500h16M4.500 1v16M7.500 1v16M10.500 1v16M13.500 1v16" stroke="#666"/></svg><svg class="caret"><use href="#caret"/></svg></button>
        <button aria-label="Viewports"><svg viewBox="0 0 18 18"><path d="M1.500 2.500h7v6h-7zM9.500 2.500h7v6h-7zM1.500 9.500h7v6h-7zM9.500 9.500h7v6h-7z" fill="#9ab5dc" stroke="#334b78" stroke-width="1.500"/></svg><svg class="caret"><use href="#caret"/></svg></button>
      </div>
    </div>
  </div>
</main>

<footer class="timeline">
  <span class="thumb"></span>
  <div class="track">
    <div class="player">
      <button aria-label="Go to start"><svg viewBox="0 0 16 16"><path d="M2.500 1v14" stroke="#444" stroke-width="2"/><path d="M14 1v14L4 8Z" fill="#444"/></svg></button>
      <button aria-label="Step back"><svg viewBox="0 0 16 16"><path d="M10 2v12L1 8Z" fill="#444"/><path d="M12 5v6" stroke="#444" stroke-width="2"/></svg></button>
      <button aria-label="Play"><svg viewBox="0 0 16 16"><path d="M2 0v16L14 8Z" fill="#444"/></svg></button>
      <button aria-label="Step forward"><svg viewBox="0 0 16 16"><path d="M6 2v12l9-6Z" fill="#444"/><path d="M4 5v6" stroke="#444" stroke-width="2"/></svg></button>
      <button aria-label="Go to end"><svg viewBox="0 0 16 16"><path d="M2 1v14L12 8Z" fill="#444"/><path d="M13.500 1v14" stroke="#444" stroke-width="2"/></svg></button>
    </div>
    <ol class="feats">
      <li><svg><use href="#link"/></svg></li><li><svg><use href="#link"/></svg></li><li><svg><use href="#pin"/></svg></li><li><svg><use href="#pin"/></svg></li><li><svg><use href="#link"/></svg></li><li><svg><use href="#joint"/></svg></li>
      <li><svg><use href="#link"/></svg></li><li><svg><use href="#joint"/></svg></li><li><svg><use href="#link"/></svg></li><li><svg><use href="#joint"/></svg></li><li><svg><use href="#link"/></svg></li><li><svg><use href="#joint"/></svg></li>
      <li><svg><use href="#link"/></svg></li><li><svg><use href="#joint"/></svg></li><li><svg><use href="#link"/></svg></li><li><svg><use href="#joint"/></svg></li><li><svg><use href="#motion"/></svg></li><li><svg><use href="#flag"/></svg></li>
      <li><svg><use href="#sk"/></svg></li><li><svg><use href="#newc"/></svg></li><li><svg><use href="#ext"/></svg></li><li><svg><use href="#link"/></svg></li><li><svg><use href="#flag"/></svg></li><li><svg><use href="#ext"/></svg></li>
      <li><svg><use href="#sk"/></svg></li><li><svg><use href="#ext"/></svg></li><li><svg><use href="#joint"/></svg></li><li><svg><use href="#joint"/></svg></li><li><svg><use href="#joint"/></svg></li><li><svg><use href="#flag"/></svg></li>
      <li><svg><use href="#ext"/></svg></li><li><svg><use href="#sk"/></svg></li><li><svg><use href="#newc"/></svg></li><li><svg><use href="#ext"/></svg></li><li><svg><use href="#sk"/></svg></li><li><svg><use href="#ext"/></svg></li>
      <li><svg><use href="#sk"/></svg></li><li><svg><use href="#ext"/></svg></li><li><svg><use href="#sk"/></svg></li><li><svg><use href="#ext"/></svg></li><li><svg><use href="#sk"/></svg></li><li><svg><use href="#ext"/></svg></li>
      <li><svg><use href="#sk"/></svg></li><li><svg><use href="#ext"/></svg></li><li><svg><use href="#link"/></svg></li><li><svg><use href="#joint"/></svg></li><li><svg><use href="#link"/></svg></li><li><svg><use href="#joint"/></svg></li>
      <li><svg><use href="#joint"/></svg></li><li><svg><use href="#joint"/></svg></li><li><svg><use href="#link"/></svg></li><li><svg><use href="#joint"/></svg></li><li><svg><use href="#link"/></svg></li><li><svg><use href="#copy"/></svg></li>
      <li><svg><use href="#joint"/></svg></li><li><svg><use href="#joint"/></svg></li><li><svg><use href="#joint"/></svg></li><li><svg><use href="#link"/></svg></li><li><svg><use href="#joint"/></svg></li><li><svg><use href="#motion"/></svg></li>
      <li><svg><use href="#pin"/></svg></li><li><svg><use href="#pin"/></svg></li><li><svg><use href="#redpin"/></svg></li><li><svg><use href="#redpin"/></svg></li><li><svg><use href="#link"/></svg></li><li><svg><use href="#joint"/></svg></li>
      <li><svg><use href="#link"/></svg></li><li><svg><use href="#joint"/></svg></li><li><svg><use href="#link"/></svg></li><li><svg><use href="#joint"/></svg></li><li><svg><use href="#link"/></svg></li><li><svg><use href="#joint"/></svg></li>
    </ol>
    <button class="prefs" aria-label="Timeline settings"><svg viewBox="0 0 18 18"><use href="#gear"/></svg></button>
  </div>
</footer>
</body>
</html>
```
FILE: styles.css
```css
* { box-sizing: border-box; }
body {
  margin: 0;
  height: 100vh;
  display: flex;
  flex-direction: column;
  overflow: hidden;
  border-left: 1px solid #444;
  background: #fff;
  color: #333;
  font: 11px/16px "Liberation Sans", Arial, sans-serif;
}
button { padding: 0; border: 0; background: none; font: inherit; color: inherit; display: flex; align-items: center; justify-content: center; }
a { color: inherit; text-decoration: none; }
h1, h2, ul, ol { margin: 0; padding: 0; font-weight: 400; list-style: none; }
svg { flex: none; display: block; }
.defs { position: absolute; width: 0; height: 0; }
.i10 { width: 10px; height: 10px; }
.i12 { width: 12px; height: 12px; }
.i16 { width: 16px; height: 16px; }
.caret { width: 6px; height: 5px; }

.titlebar { height: 31px; flex: none; display: flex; align-items: center; padding-left: 8px; gap: 6px; border-top: 1px solid #8a7b4f; background: #fff; }
.title { font: 11px/16px "Open Sans", sans-serif; color: #888; }
.wincontrols { margin-left: auto; display: flex; }
.wincontrols button { width: 45px; height: 30px; }

.tabbar { height: 32px; flex: none; display: flex; background: #cacaca; color: #555; }
.quick { width: 195px; display: flex; align-items: center; gap: 17px; padding: 0 0 0 8px; }
.quick button { gap: 6px; }
.quick .dim { color: #999; }
.quick button:nth-child(4) { gap: 8px; }
.quick button:nth-child(5) { gap: 8px; margin-left: -7px; }
.doctabs { flex: 1; display: flex; gap: 4px; padding-top: 4px; }
.doctab { flex: 1; display: flex; align-items: center; padding-left: 8px; background: #bababa; color: #777; border-radius: 4px 4px 0 0; font-size: 12px; }
.doctab.on { background: #f1f1f1; }
.doctab a { flex: 1; display: flex; align-items: center; justify-content: center; gap: 4px; color: #555; }
.doctab.on a { color: #333; }
.doctab a svg { color: #888; }
.doctab.on a svg { color: #555; }
.doctab button { width: 22px; height: 28px; }
.newtab { width: 28px; margin: 4px 3px 0 4px; background: #bababa; border-radius: 4px 4px 0 0; }
.account { display: flex; align-items: center; }
.account button { width: 33px; height: 32px; }
.account .avatar { width: 44px; }
.avatar svg { width: 24px; height: 24px; }

.ribbon { height: 82px; flex: none; display: flex; background: #f1f1f1; border-bottom: 1px solid #d9d9d9; }
.workspace { width: 110px; height: 62px; margin: 10px 10px 0 11px; gap: 6px; border: 2px solid #dcdcdc; border-radius: 5px; font-weight: 700; font-size: 10px; }
.tools { display: flex; flex-direction: column; font-size: 10px; }
.modes { display: flex; gap: 22px; padding-left: 7px; height: 25px; }
.modes a { padding: 4px 12px 0; }
.modes .on { color: #0696d7; border-bottom: 3px solid #0696d7; }
.groups { display: flex; }
.group { display: flex; flex-direction: column; align-items: center; padding: 0 5px; border-right: 1px solid #d9d9d9; height: 55px; }
.group:first-child { padding-left: 0; }
.group.mid { padding: 0 7px; }
.group.wide { padding: 0 12px; }
.group.last { border: 0; }
.icons { display: flex; flex: none; height: 39px; }
.icons button { width: 43px; height: 36px; }
.icons svg { width: 32px; height: 32px; }
.icons .sel svg { width: 38px; height: 38px; background: #0696d7; }
.icons .sel { height: 37px; }
.label { gap: 4px; height: 16px; flex: none; }
.icons .fx { font: italic 32px/36px "Liberation Serif", serif; color: #555; }

.stage { flex: 1; min-height: 0; position: relative; }
.model { position: absolute; inset: 0; width: 100%; height: 100%; }
.overlay { position: relative; height: 100%; display: flex; flex-direction: column; justify-content: space-between; padding: 4px 0 4px 4px; }
.upper { display: flex; justify-content: space-between; align-items: flex-start; }
.panel { width: 300px; height: 25px; display: flex; align-items: center; gap: 6px; padding: 0 2px 0 3px; background: #f1f1f1; border: 1px solid #c8c8c8; font-size: 10px; }
.panel h2 { flex: 1; font-size: 10px; color: #555; padding-left: 3px; }
.comments { border-top-color: #f1f1f1; }
.comments h2 { padding-left: 21px; }
.grip { width: 3px; height: 11px; border: 1px solid #888; border-width: 0 1px; }
.tree { padding-top: 3px; }
.tree li { height: 24px; display: flex; align-items: center; padding-left: 36px; gap: 8px; }
.tree .root { padding-left: 16px; gap: 8px; }
.tri { width: 10px; height: 15px; }
.node { height: 20px; display: flex; align-items: center; padding: 0 10px 0 3px; background: #f1f1f1; }
.eye { width: 16px; height: 12px; margin-right: 9px; }
.eye.tall { height: 16px; margin-right: 14px; }
.comp { width: 17px; height: 16px; margin-right: 13px; }
.root .node { padding-right: 7px; }
.root .eye { margin-right: 6px; }
.picked { display: flex; align-items: center; height: 16px; padding: 0 8px 0 3px; margin-right: 4px; background: #999; color: #fff; font-size: 12px; }
.node input { appearance: none; width: 13px; height: 13px; margin: 0; border: 1px solid #333; border-radius: 50%; background: radial-gradient(circle, #333 2px, #fff 3px); }
.viewcube { width: 104px; height: 104px; margin: 1px 11px 0 0; }
.axis { font: bold 14px "Liberation Sans", sans-serif; }
.axis.z { fill: #7b7bff; }
.axis.x { fill: #f88; }
.axis.y { fill: #8f8; }
.face { font: bold 8px "Liberation Sans", sans-serif; fill: #888; }
.lower { display: grid; grid-template-columns: 300px 1fr 271px; align-items: end; }
.navbar { justify-self: center; height: 24px; display: flex; align-items: center; gap: 7px; padding: 0 4px; background: #f1f1f1; color: #333; }
.navbar button { gap: 1px; }
.navbar svg:first-child { width: 18px; height: 18px; }

.timeline { height: 46px; flex: none; background: #f1f1f1; border-top: 2px solid #c8c8c8; }
.thumb { display: block; width: 28px; height: 6px; margin-left: 4px; background: #c8c8c8; border-radius: 0 0 4px 4px; }
.track { display: flex; padding-left: 5px; }
.player { display: flex; gap: 9px; margin-right: 17px; padding: 4px 0 0 4px; }
.player svg { width: 16px; height: 16px; }
.player button { height: 36px; }
.feats { display: flex; height: 35px; padding-top: 8px; }
.feats li { width: 24px; height: 27px; display: flex; justify-content: center; border-bottom: 2px solid #c8c8c8; background: linear-gradient(#c8c8c8, #c8c8c8) center bottom / 2px 6px no-repeat; }
.feats svg { width: 18px; height: 18px; }
.prefs { margin: 0 9px 0 auto; height: 44px; }
.prefs svg { width: 18px; height: 18px; }
```
